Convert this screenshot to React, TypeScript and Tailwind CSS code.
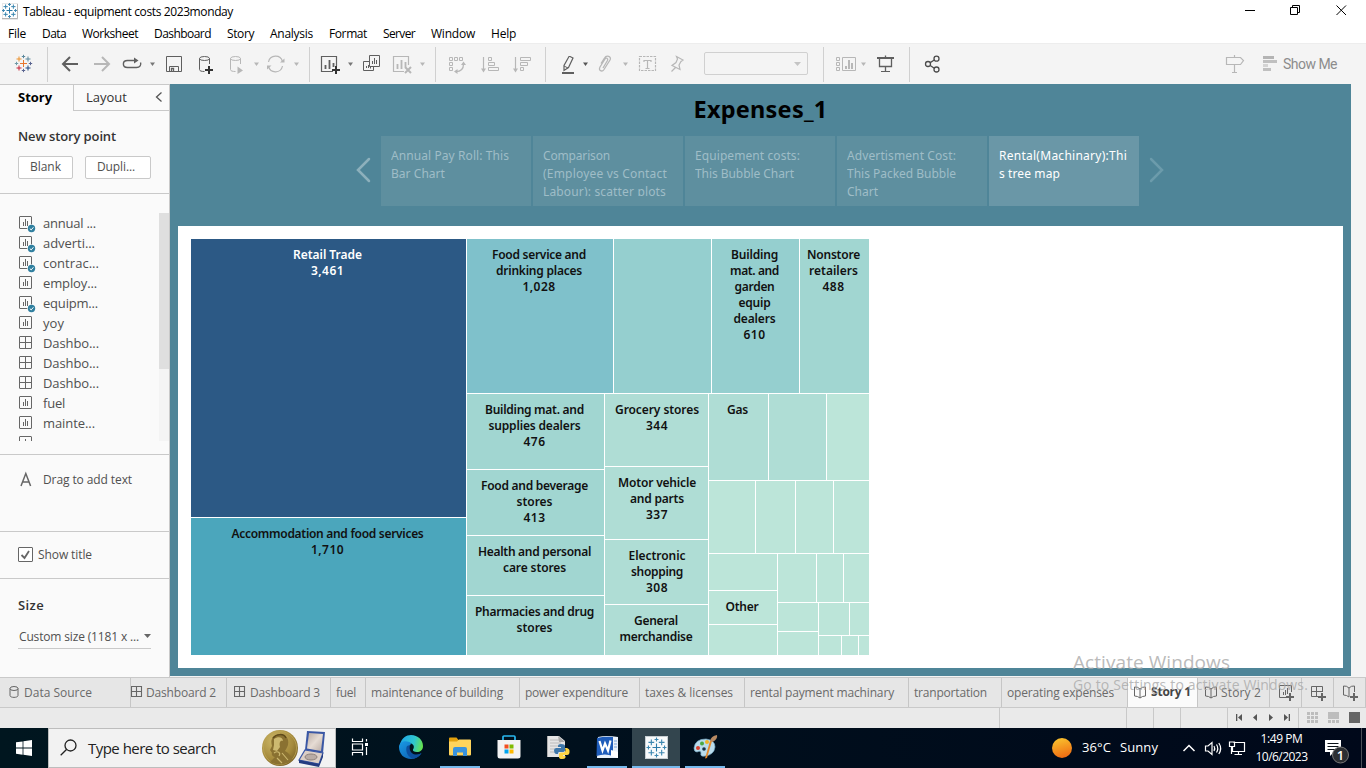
import { useLayoutEffect, useRef } from "react";
import type { ReactNode } from "react";

const SEGOE = "font-['Open_Sans',sans-serif]";
const VIZ = "font-['Noto_Sans',sans-serif]";

/* Single line of text tracked so that it spans `w` pixels. */
function Fit({ w, className = "", children }: { w: number; className?: string; children: string }) {
  const ref = useRef<HTMLSpanElement>(null);
  useLayoutEffect(() => {
    const el = ref.current;
    if (!el) return;
    el.style.letterSpacing = "0px";
    const natural = el.getBoundingClientRect().width;
    el.style.letterSpacing = `${(w - natural) / children.length}px`;
  }, [w, children]);
  return (
    <span ref={ref} className={`inline-block shrink-0 whitespace-pre ${className}`}>
      {children}
    </span>
  );
}

function Plus({ x, y, r, c, s = 1 }: { x: number; y: number; r: number; c: string; s?: number }) {
  return <path d={`M${x - r} ${y}H${x + r}M${x} ${y - r}V${y + r}`} stroke={c} strokeWidth={s} fill="none" />;
}

function TableauMark({ x, y, k, colors, s = 1 }: { x: number; y: number; k: number; colors: string[]; s?: number }) {
  const d = 4.5 * k;
  const f = 7 * k;
  return (
    <g>
      <Plus x={x} y={y} r={3.5 * k} c={colors[0]} s={s} />
      <Plus x={x} y={y - f} r={1.7 * k} c={colors[1]} s={s} />
      <Plus x={x + d} y={y - d} r={2.5 * k} c={colors[2]} s={s} />
      <Plus x={x + f} y={y} r={1.7 * k} c={colors[3]} s={s} />
      <Plus x={x + d} y={y + d} r={2.5 * k} c={colors[4]} s={s} />
      <Plus x={x} y={y + f} r={1.7 * k} c={colors[5]} s={s} />
      <Plus x={x - d} y={y + d} r={2.5 * k} c={colors[6]} s={s} />
      <Plus x={x - f} y={y} r={1.7 * k} c={colors[7]} s={s} />
      <Plus x={x - d} y={y - d} r={2.5 * k} c={colors[8]} s={s} />
    </g>
  );
}

const BLUES = ["#2b7aa8", "#3c87b0", "#3c87b0", "#3c87b0", "#3c87b0", "#3c87b0", "#3c87b0", "#3c87b0", "#3c87b0"];
const BRAND = ["#e8762d", "#5b879b", "#5b879b", "#5b6591", "#1f457e", "#5b6591", "#c72035", "#7099a6", "#eb912c"];

/* ---------- title bar and menu ---------- */

function TitleBar() {
  return (
    <div className="flex h-6 shrink-0 items-start bg-white">
      <svg width="16" height="17" viewBox="0 0 16 17" className="ml-0.5 mr-[5px] mt-[3px] shrink-0">
        <rect x="0.5" y="0.5" width="15" height="16" fill="#fff" stroke="#e8e8e8" />
        <path d="M0 15.500H15.500V1" stroke="#b5b5b5" fill="none" />
        <TableauMark x={7.5} y={7.5} k={0.86} colors={BLUES} />
      </svg>
      <Fit w={210} className="text-xs leading-6 text-black">Tableau - equipment costs 2023monday</Fit>
      <div className="grow" />
      <svg width="126" height="24" viewBox="1240 0 126 24" fill="none" stroke="#000">
        <path d="M1245 10.500H1255" />
        <path d="M1290.500 7.500H1297.500V14.500H1290.500ZM1292.500 7V5.500H1299.500V12.500H1298" />
        <path d="M1336.500 5.500L1346 15M1346 5.500L1336.500 15" />
      </svg>
    </div>
  );
}

const MENUS: [string, number][] = [
  ["File", 18], ["Data", 24], ["Worksheet", 56], ["Dashboard", 57], ["Story", 27],
  ["Analysis", 43], ["Format", 38], ["Server", 32], ["Window", 44], ["Help", 25],
];

function MenuBar() {
  return (
    <div className="flex h-[19px] shrink-0 items-start gap-4 bg-white pl-2">
      {MENUS.map(([t, w]) => (
        <Fit key={t} w={w} className="text-xs leading-5 text-black">{t}</Fit>
      ))}
    </div>
  );
}

/* ---------- toolbar ---------- */

const DK = "#5f5f5f";
const LT = "#b7b7b7";

function Cell({ x, w, c = DK, children }: { x: number; w: number; c?: string; children: ReactNode }) {
  return (
    <svg width={w} height="24" viewBox={`${x} 52 ${w} 24`} fill="none" stroke={c} className="mt-[9px] shrink-0">
      {children}
    </svg>
  );
}

function Sep() {
  return <div className="mt-1 h-[35px] w-px shrink-0 bg-[#d0d0d0]" />;
}

function Caret({ x, c }: { x: number; c: string }) {
  return <path d={`M${x} 62.500H${x + 5}L${x + 2.5} 66Z`} fill={c} stroke="none" />;
}

function Cylinder({ x }: { x: number }) {
  return (
    <g>
      <ellipse cx={x + 5} cy="58.500" rx="5" ry="2" />
      <path d={`M${x} 58.500V69.500C${x} 71 ${x + 2} 71.500 ${x + 5} 71.500M${x + 10} 58.500V64`} />
    </g>
  );
}

function Toolbar() {
  return (
    <div className="flex h-[41px] shrink-0 items-start border-t border-[#ededed] bg-[#f4f4f4] *:-translate-y-px">
      <Cell x={0} w={47}><TableauMark x={23.5} y={63.5} k={1} colors={BRAND} /></Cell>
      <Sep />
      <Cell x={48} w={44}><path d="M78 64H63.500M70 57L63 64L70 71" strokeWidth="2" /></Cell>
      <Cell x={92} w={26} c={LT}><path d="M94 64H108.500M102 57L109 64L102 71" strokeWidth="2" /></Cell>
      <Cell x={118} w={42}>
        <path d="M135 60.500H127.500C122 60.500 122 67.500 127.500 67.500H136.500C140 67.500 141.500 65 140.500 62.500" strokeWidth="1.400" />
        <path d="M134 57.500L138.500 60.500L134 63.500Z" fill={DK} stroke="none" />
        <Caret x={150} c="#777" />
      </Cell>
      <Cell x={160} w={30}>
        <path d="M166.500 56.500H181.500V71.500H166.500Z" />
        <path d="M169.500 71V66.500H178.500V71" /><path d="M171.500 71V68.500H173.500V71" strokeWidth="1.300" />
      </Cell>
      <Cell x={190} w={34}>
        <Cylinder x={199.5} />
        <path d="M205 70H213M209 66V74" stroke="#333" strokeWidth="2" />
      </Cell>
      <Cell x={224} w={38} c={LT}>
        <Cylinder x={230.5} /><path d="M237.500 66.500L243 70.500L237.500 74Z" fill={LT} stroke="none" /><Caret x={254} c={LT} />
      </Cell>
      <Cell x={262} w={47} c={LT}>
        <path d="M268.500 62A7.200 7.200 0 0 1 282.500 61.500M282.500 66A7.200 7.200 0 0 1 268.500 66.500" strokeWidth="1.200" />
        <path d="M280 62.500H284.500V58.500ZM271.500 65.500H267V69.500Z" fill={LT} stroke="none" />
        <Caret x={294} c={LT} />
      </Cell>
      <Sep />
      <Cell x={310} w={46}>
        <path d="M333 71.500H321.500V56.500H336.500V66" strokeWidth="1.200" />
        <path d="M325.500 65V69M329.500 60V69M333.500 63V67" strokeWidth="1.800" />
        <path d="M332 70H340M336 66V74" stroke="#333" strokeWidth="2" /><Caret x={348} c="#777" />
      </Cell>
      <Cell x={356} w={30}>
        <path d="M369.500 55.500H379.500V66.500H369.500ZM369 61.500H363.500V70.500H373.500V67" />
        <path d="M372.500 61V64M374.500 58V64M376.500 60V64M366.500 66V68M368.500 65V68M370.500 67V68.500" />
      </Cell>
      <Cell x={386} w={49} c={LT}>
        <path d="M404 71.500H393.500V56.500H408.500V65" strokeWidth="1.200" />
        <path d="M397.500 64V69M401.500 60V69M405.500 62V67" strokeWidth="1.800" />
        <path d="M405 67L411 73M411 67L405 73" strokeWidth="2" /><Caret x={420} c={LT} />
      </Cell>
      <Sep />
      <Cell x={436} w={38} c={LT}>
        <path d="M449.500 57.500H452.500V60.500H449.500ZM454.500 57.500H457.500V60.500H454.500ZM459.500 57.500H462.500V60.500H459.500ZM449.500 62.500H452.500V65.500H449.500ZM449.500 67.500H452.500V70.500H449.500Z" />
        <path d="M456 71.500C461 71.500 463.500 69 463.500 64" strokeWidth="1.300" />
        <path d="M461 65H466L463.500 61.500ZM457.500 69V74L454 71.500Z" fill={LT} stroke="none" />
      </Cell>
      <Cell x={474} w={32} c={LT}>
        <path d="M483.500 57V70" strokeWidth="1.200" /><path d="M481 68.500H486L483.500 72.500Z" fill={LT} stroke="none" />
        <path d="M488.500 57.500H491.500V60.500H488.500ZM488.500 62.500H494.500V65.500H488.500ZM488.500 67.500H498.500V70.500H488.500Z" />
      </Cell>
      <Cell x={506} w={39} c={LT}>
        <path d="M515.500 57V70" strokeWidth="1.200" /><path d="M513 68.500H518L515.500 72.500Z" fill={LT} stroke="none" />
        <path d="M520.500 57.500H530.500V60.500H520.500ZM520.500 62.500H527.500V65.500H520.500ZM520.500 67.500H523.500V70.500H520.500Z" />
      </Cell>
      <Sep />
      <Cell x={546} w={46}>
        <path d="M570 56.500L573 58L568.500 67.500L564 70.500V65.500L569 56.500Z" strokeWidth="1.200" />
        <path d="M564 66L568 68" /><path d="M562 73H574" strokeWidth="2" />
        <Caret x={583} c="#555" />
      </Cell>
      <Cell x={592} w={40} c={LT}>
        <path d="M603 68L607.500 60.500C608.500 58.500 606 57 605 59L600 67C598 70.500 602 72.500 604 69.500L610 60C612 56.500 606.500 54.500 604.500 58L601 63.500" strokeWidth="1.300" />
        <Caret x={623} c={LT} />
      </Cell>
      <Cell x={632} w={30} c={LT}>
        <path d="M639.500 56.500H655.500V70.500H639.500Z" strokeDasharray="2.500 1" strokeWidth="1.200" />
        <path d="M644 62V60.500H651V62M647.500 60.500V68M645.500 68.500H649.500" strokeWidth="1.200" />
      </Cell>
      <Cell x={662} w={42} c={LT}>
        <path d="M676.500 56.500L683 60L681 61.500L679 65L680 69.500L672 65.500L676 62.500L677.500 59ZM675.500 67.500L671.500 71.500" strokeWidth="1.200" />
      </Cell>
      <div className="mt-[9px] flex h-[23px] w-[104px] shrink-0 items-center justify-end rounded-xs border border-[#d0d0d0] pr-1.5">
        <svg width="7" height="4"><path d="M0 0H7L3.500 4Z" fill="#c4c4c4" /></svg>
      </div>
      <div className="w-[15px] shrink-0" />
      <Sep />
      <Cell x={824} w={46} c={LT}>
        <path d="M836.500 57.500H839.500V60.500H836.500ZM836.500 62.500H839.500V65.500H836.500ZM836.500 67.500H839.500V70.500H836.500ZM842.500 57.500H855.500V70.500H842.500Z" />
        <path d="M846 66V69M849 60V69M852 63V69" strokeWidth="2" /><Caret x={861} c={LT} />
      </Cell>
      <Cell x={870} w={39}>
        <path d="M877 58H894" strokeWidth="2" /><path d="M879.500 58V66.500H891.500V58M885.500 55.500V57M885.500 67V71" strokeWidth="1.300" /><path d="M881 71.500H890" />
      </Cell>
      <Sep />
      <Cell x={910} w={40} c="#4c4c4c">
        <circle cx="928" cy="64" r="2.500" strokeWidth="1.300" /><circle cx="936.500" cy="58.700" r="2.500" strokeWidth="1.300" /><circle cx="936.500" cy="69.500" r="2.500" strokeWidth="1.300" />
        <path d="M930.200 62.600L934.300 60M930.200 65.500L934.300 68.200" strokeWidth="1.300" />
      </Cell>
      <div className="grow" />
      <Cell x={1220} w={40} c={LT}>
        <path d="M1226.500 57.500H1240.500L1243.500 60.500L1240.500 64.500H1226.500ZM1234.500 55V57M1234.500 65V72M1232 72.500H1237" strokeWidth="1.200" />
      </Cell>
      <Cell x={1260} w={23} c="#b4b4b4">
        <path d="M1263 57.500H1274" strokeWidth="3" /><path d="M1263 61.500H1277" strokeWidth="3" stroke="#c0c0c0" />
        <path d="M1263 65.500H1268" strokeWidth="3" stroke="#d4d4d4" /><path d="M1263 69.500H1271" strokeWidth="3" stroke="#c0c0c0" />
      </Cell>
      <div className="mt-[9px] flex h-6 w-[83px] shrink-0 items-center font-['Roboto',sans-serif] text-[14px] text-[#8c8c8c]">
        <Fit w={54}>Show Me</Fit>
      </div>
    </div>
  );
}

/* ---------- story side panel ---------- */

type Kind = "sheet" | "used" | "dash";

const SHEETS: [Kind, string, number][] = [
  ["used", "annual ...", 53], ["used", "adverti...", 52], ["used", "contrac...", 56], ["sheet", "employ...", 54],
  ["used", "equipm...", 55], ["sheet", "yoy", 21], ["dash", "Dashbo...", 56], ["dash", "Dashbo...", 56],
  ["dash", "Dashbo...", 56], ["sheet", "fuel", 22], ["sheet", "mainte...", 52], ["sheet", "power ...", 52],
];

function SheetIcon({ kind }: { kind: Kind }) {
  return (
    <svg width="18" height="18" viewBox="0 0 18 18" fill="none" stroke="#666" className="mt-px shrink-0">
      <rect x="0.500" y="1.500" width="12" height="12" rx="0.500" />
      {kind === "dash" ? (
        <path d="M6.500 2V13M1 7.500H12" />
      ) : (
        <path d="M4.500 7V11M6.500 4V11M8.500 6V11" />
      )}
      {kind === "used" && (
        <g>
          <circle cx="12.500" cy="13.500" r="4.300" fill="#fafafa" stroke="none" />
          <circle cx="12.500" cy="13.500" r="3.700" fill="#2f7f9f" stroke="none" />
          <path d="M10.800 13.600L12.200 14.900L14.400 12.300" stroke="#fff" />
        </g>
      )}
    </svg>
  );
}

function SidePanel() {
  return (
    <aside className="flex h-full w-[170px] shrink-0 flex-col border-r border-t border-[#c9c9c9] bg-[#fafafa] font-['Open_Sans',sans-serif] text-[#505050]">
      <div className="flex h-[26px] shrink-0">
        <div className="flex w-[73px] items-start pl-[18px] text-[13px] font-bold text-black">
          <Fit w={34} className="leading-6">Story</Fit>
        </div>
        <div className="flex grow items-start justify-between border-b border-l border-[#c9c9c9] pl-3 pr-1.5 text-[13px] text-[#333]">
          <Fit w={41} className="leading-6">Layout</Fit>
          <svg width="8" height="10" fill="none" stroke="#555" className="mt-[7px]"><path d="M6.500 0.500L1.500 5L6.500 9.500" strokeWidth="1.300" /></svg>
        </div>
      </div>
      <div className="flex h-[82px] shrink-0 flex-col items-start pl-[18px] pt-4">
        <Fit w={98} className="text-[13px] font-semibold leading-[18px] text-[#333]">New story point</Fit>
        <div className="mt-[11px] flex gap-3 text-xs leading-5">
          <div className="flex h-[23px] w-[55px] items-start justify-center rounded-xs border border-[#c9c9c9] bg-white"><Fit w={31}>Blank</Fit></div>
          <div className="flex h-[23px] w-[66px] items-start rounded-xs border border-[#c9c9c9] bg-white pl-[11px]"><Fit w={38}>Dupli...</Fit></div>
        </div>
      </div>
      <div className="h-px shrink-0 bg-[#c9c9c9]" />
      <div className="mt-[19px] flex h-[228px] shrink-0">
        <div className="flex grow flex-col overflow-hidden pl-[19px] pt-px">
          {SHEETS.map(([kind, t, w], i) => (
            <div key={i} className="flex h-5 shrink-0 items-start gap-1.5">
              <SheetIcon kind={kind} />
              <Fit w={w} className="-mt-px text-[13px] leading-5">{t}</Fit>
            </div>
          ))}
        </div>
        <div className="w-2.5 shrink-0 bg-[#f4f4f4]"><div className="h-[156px] bg-[#dfdfdf]" /></div>
      </div>
      <div className="mt-[13px] h-px shrink-0 bg-[#c9c9c9]" />
      <div className="flex h-[76px] shrink-0 items-start pl-5 pt-[15px]">
        <svg width="12" height="17" viewBox="0 0 12 17" fill="none" stroke="#666" strokeWidth="1.500" className="mr-[11px] mt-px"><path d="M1 15L5.800 2.500L10.600 15M2.600 11H9" /></svg>
        <Fit w={89} className="h-5 text-xs leading-5">Drag to add text</Fit>
      </div>
      <div className="h-px shrink-0 bg-[#c9c9c9]" />
      <div className="flex h-[46px] shrink-0 items-start gap-[5px] pl-[18px] pt-[15px]">
        <svg width="15" height="15" fill="none" stroke="#666"><rect x="0.500" y="0.500" width="14" height="14" rx="0.500" fill="#fff" /><path d="M3.500 8L6.500 11L11 4" strokeWidth="1.800" /></svg>
        <Fit w={54} className="text-xs leading-4">Show title</Fit>
      </div>
      <div className="h-px shrink-0 bg-[#c9c9c9]" />
      <div className="flex flex-col items-start pl-[18px] pt-[17px]">
        <Fit w={26} className="text-[13px] font-semibold leading-[18px] text-[#333]">Size</Fit>
        <div className="mt-[13px] flex h-[22px] w-[133px] items-center justify-between border-b border-[#c9c9c9] pl-px text-xs">
          <Fit w={120} className="-mt-0.5">Custom size (1181 x ...</Fit>
          <svg width="7" height="4" className="-mt-1"><path d="M0 0H7L3.500 4Z" fill="#666" /></svg>
        </div>
      </div>
    </aside>
  );
}

/* ---------- tree map ---------- */

function Tile({ className, lines = [], nudge = "pr-0.5" }: { className: string; lines?: [string, number][]; nudge?: string }) {
  return (
    <div className={`flex shrink-0 flex-col items-center overflow-hidden pt-2 text-xs font-semibold leading-4 ${nudge} ${className}`}>
      {lines.map(([t, w], i) => (
        <Fit key={i} w={w} className="h-4">{t}</Fit>
      ))}
    </div>
  );
}

const T3 = "bg-[#95cfcf]";
const T4 = "bg-[#a1d6d1]";
const T5 = "bg-[#afddd5]";
const T6 = "bg-[#bce5d9]";

function TreeMap() {
  return (
    <div className={`flex h-[416px] w-[678px] gap-px text-[#111] ${VIZ}`}>
      <div className="flex w-[275px] shrink-0 flex-col gap-px">
        <Tile className="h-[278px] bg-[#2c5985] text-white" lines={[["Retail Trade", 69], ["3,461", 33]]} />
        <Tile className="h-[137px] bg-[#4ba6bc]" lines={[["Accommodation and food services", 192], ["1,710", 33]]} />
      </div>
      <div className="flex flex-col gap-px">
        <div className="flex h-[154px] gap-px">
          <Tile className="w-[146px] bg-[#7fc1cb]" lines={[["Food service and", 94], ["drinking places", 86], ["1,028", 33]]} />
          <Tile className={`w-[97px] ${T3}`} />
          <Tile className={`w-[87px] ${T3}`} lines={[["Building", 47], ["mat. and", 49], ["garden", 40], ["equip", 32], ["dealers", 42], ["610", 22]]} />
          <Tile className={`w-[69px] ${T4}`} lines={[["Nonstore", 53], ["retailers", 49], ["488", 22]]} />
        </div>
        <div className="flex h-[261px] gap-px">
          <div className="flex w-[137px] flex-col gap-px">
            <Tile className={`h-[75px] ${T4}`} lines={[["Building mat. and", 99], ["supplies dealers", 92], ["476", 22]]} />
            <Tile className={`h-[65px] ${T4}`} lines={[["Food and beverage", 107], ["stores", 36], ["413", 22]]} />
            <Tile className={`h-[59px] ${T4}`} lines={[["Health and personal", 113], ["care stores", 63]]} />
            <Tile className={`h-[59px] ${T4}`} lines={[["Pharmacies and drug", 119], ["stores", 36]]} />
          </div>
          <div className="flex w-[103px] flex-col gap-px">
            <Tile nudge="pl-px" className={`h-[72px] ${T5}`} lines={[["Grocery stores", 84], ["344", 22]]} />
            <Tile nudge="pl-px" className={`h-[72px] ${T5}`} lines={[["Motor vehicle", 78], ["and parts", 54], ["337", 22]]} />
            <Tile nudge="pl-px" className={`h-[64px] ${T5}`} lines={[["Electronic", 57], ["shopping", 52], ["308", 22]]} />
            <Tile nudge="pr-px" className={`h-[50px] ${T5}`} lines={[["General", 44], ["merchandise", 73]]} />
          </div>
          <div className="flex w-[160px] flex-col gap-px">
            <div className="flex h-[86px] gap-px">
              <Tile className={`w-[59px] ${T5}`} lines={[["Gas", 21]]} />
              <Tile className={`w-[57px] ${T5}`} />
              <Tile className={`w-[42px] ${T6}`} />
            </div>
            <div className="flex h-[72px] gap-px">
              <Tile className={`w-[46px] ${T6}`} />
              <Tile className={`w-[39px] ${T6}`} />
              <Tile className={`w-[37px] ${T6}`} />
              <Tile className={`w-[35px] ${T6}`} />
            </div>
            <div className="flex h-[101px] gap-px">
              <div className="flex w-[68px] flex-col gap-px">
                <Tile className={`h-[36px] ${T6}`} />
                <Tile className={`h-[33px] ${T6}`} lines={[["Other", 33]]} />
                <Tile className={`h-[30px] ${T6}`} />
              </div>
              <div className="flex w-[91px] flex-col gap-px">
                <div className="flex h-[48px] gap-px">
                  <Tile className={`w-[38px] ${T6}`} />
                  <Tile className={`w-[26px] ${T6}`} />
                  <Tile className={`w-[25px] ${T6}`} />
                </div>
                <div className="flex h-[52px] gap-px">
                  <div className="flex w-[40px] flex-col gap-px">
                    <Tile className={`h-[28px] ${T6}`} />
                    <Tile className={`h-[23px] ${T6}`} />
                  </div>
                  <div className="flex w-[50px] flex-col gap-px">
                    <div className="flex h-[32px] gap-px">
                      <Tile className={`w-[30px] ${T6}`} />
                      <Tile className={`w-[19px] ${T6}`} />
                    </div>
                    <div className="flex h-[19px] gap-px">
                      <Tile className={`w-[22px] ${T6}`} />
                      <Tile className={`w-[16px] ${T6}`} />
                      <Tile className={`w-[10px] ${T6}`} />
                    </div>
                  </div>
                </div>
              </div>
            </div>
          </div>
        </div>
      </div>
    </div>
  );
}

/* ---------- story view ---------- */

const POINTS: [string, number][][] = [
  [["Annual Pay Roll: This", 118], ["Bar Chart", 54]],
  [["Comparison", 67], ["(Employee vs Contact", 124], ["Labour): scatter plots", 123]],
  [["Equipement costs:", 105], ["This Bubble Chart", 99]],
  [["Advertisment Cost:", 109], ["This Packed Bubble", 109], ["Chart", 31]],
  [["Rental(Machinary):Thi", 128], ["s tree map", 61]],
];

function StoryView() {
  return (
    <main className="flex h-[592px] w-[1181px] shrink-0 flex-col bg-[#4f8598]">
      <div className={`flex h-[52px] shrink-0 items-start justify-center font-bold text-black ${VIZ}`}>
        <Fit w={134} className="text-[23.5px] leading-[50px]">Expenses_1</Fit>
      </div>
      <div className="flex h-[70px] shrink-0 items-center pl-[185px]">
        <svg width="26" height="26" fill="none" stroke="#8db0bc" strokeWidth="2.500" strokeLinecap="round" className="-mt-0.5"><path d="M14 2L3 13L14 24" /></svg>
        <div className="flex gap-0.5">
          {POINTS.map((lines, i) => {
            const on = i === 4;
            return (
              <div key={i} className={`h-[70px] w-[150px] pl-2.5 pt-[11px] ${on ? "bg-[#6a97a7] text-white" : "bg-[#5e8f9f] text-[#9fbdc7]"}`}>
                <div className={`flex h-[49px] flex-col items-start overflow-hidden text-[12px] leading-[18px] ${VIZ}`}>
                  {lines.map(([t, w]) => (
                    <Fit key={t} w={w} className="h-[18px]">{t}</Fit>
                  ))}
                </div>
              </div>
            );
          })}
        </div>
        <svg width="26" height="26" fill="none" stroke="#6c9bab" strokeWidth="2.500" strokeLinecap="round" className="-mt-0.5"><path d="M12 2L23 13L12 24" /></svg>
      </div>
      <div className="ml-2 mt-5 h-[442px] w-[1165px] shrink-0 bg-white pl-[13px] pt-[13px]">
        <TreeMap />
      </div>
    </main>
  );
}

/* ---------- sheet tabs and status ---------- */

function Grid4() {
  return <svg width="12" height="13" fill="none" stroke="#666" className="shrink-0"><path d="M0.500 0.500H10.500V10.500H0.500ZM5.500 0V11M0 5.500H11" strokeWidth="1.100" /></svg>;
}

function Book() {
  return <svg width="12" height="13" fill="none" stroke="#666" className="shrink-0"><path d="M0.500 1L3.500 1.300L6 3L8.500 1.300L11.500 1V10L8.500 10.500L6 12L3.500 10.500L0.500 10ZM6 3V12" /></svg>;
}

const TABS: [string, string, number][] = [
  ["fuel", "w-[35px]", 20], ["maintenance of building", "w-[154px]", 132], ["power expenditure", "w-[120px]", 103],
  ["taxes & licenses", "w-[105px]", 88], ["rental payment machinary", "w-[164px]", 144],
  ["tranportation", "w-[93px]", 73], ["operating expenses", "w-[126px]", 107],
];

const TAB = "flex h-full shrink-0 border-r border-[#c6c6c6]";

function SheetTabs() {
  return (
    <div className="flex h-[31px] w-full shrink-0 border-b border-t border-[#c9c9c9] bg-[#e6e6e6] font-['Open_Sans',sans-serif] text-xs text-[#6a6a6a]">
      <div className={`${TAB} w-[131px] items-center pl-[9px]`}>
        <svg width="10" height="13" fill="none" stroke="#666" className="mr-[5px]"><ellipse cx="5" cy="2.500" rx="4" ry="2" /><path d="M1 2.500V9.500C1 12 9 12 9 9.500V2.500" /></svg>
        <Fit w={68}>Data Source</Fit>
      </div>
      <div className={`${TAB} w-24 items-center`}><Grid4 /><Fit w={70} className="ml-[3px]">Dashboard 2</Fit></div>
      <div className={`${TAB} w-[104px] items-center pl-[7px]`}><Grid4 /><Fit w={70} className="ml-1">Dashboard 3</Fit></div>
      {TABS.map(([t, width, tw], i) => (
        <div key={i} className={`${TAB} items-center pl-[5px] ${width}`}>
          <Fit w={tw}>{t}</Fit>
        </div>
      ))}
      <div className={`${TAB} w-[70px] items-center bg-[#fbfbfb] pl-1.5 font-bold text-[#444]`}><Book /><Fit w={40} className="-mt-0.5 ml-[5px]">Story 1</Fit></div>
      <div className={`${TAB} w-[72px] items-center pl-[7px]`}><Book /><Fit w={40} className="ml-1">Story 2</Fit></div>
      <div className={`${TAB} w-8 items-start pl-[9px] pt-[7px]`}>
        <svg width="16" height="16" fill="none" stroke="#666"><path d="M7 12.500H0.500V0.500H12.500V7M4.500 7V10M6.500 5V10M8.500 3V9" /><path d="M7 12H15M11 8V16" strokeWidth="2" /></svg>
      </div>
      <div className={`${TAB} w-8 items-start pl-[9px] pt-[7px]`}>
        <svg width="16" height="16" fill="none" stroke="#666"><path d="M7 11.500H0.500V1.500H11.500V7M5.500 1V12M0 6.500H12" /><path d="M7 12H15M11 8V16" strokeWidth="2" /></svg>
      </div>
      <div className={`${TAB} w-8 items-start pl-[9px] pt-[7px]`}>
        <svg width="16" height="16" fill="none" stroke="#666"><path d="M6 12L3.500 10.500L0.500 10V1L3.500 1.300L6 3L8.500 1.300L11.500 1V7M6 3V12" /><path d="M7 12H15M11 8V16" strokeWidth="2" /></svg>
      </div>
    </div>
  );
}

function StatusBar() {
  const cell = "h-full shrink-0 border-r border-[#c9c9c9]";
  return (
    <div className="flex h-5 w-full shrink-0 items-center bg-[#eaeaea]">
      <div className={`${cell} w-[1000px]`} />
      <div className={`${cell} w-[127px]`} />
      <div className={`${cell} w-[27px]`} />
      <div className={`${cell} w-[27px]`} />
      <div className={`${cell} w-[47px]`} />
      <div className={`${cell} w-[71px]`}>
        <svg width="70" height="20" viewBox="1228 708 70 20" fill="#555">
          <path d="M1236 714H1237.300V721H1236ZM1242 714V721L1238 717.500ZM1257 714V721L1253 717.500ZM1269 714V721L1273 717.500ZM1284 714V721L1288 717.500ZM1288.700 714H1290V721H1288.700Z" />
        </svg>
      </div>
      <svg width="67" height="20" viewBox="1299 708 67 20" fill="#bdbdbd" className="shrink-0">
        {[0, 1, 2].map((r) => [0, 1, 2].map((c) => <rect key={`${r}${c}`} x={1307 + c * 4} y={712 + r * 4} width="3" height="3" />))}
        <rect x="1328" y="712" width="11" height="7" />
        <rect x="1328" y="720" width="3" height="3" /><rect x="1332" y="720" width="3" height="3" /><rect x="1336" y="720" width="3" height="3" />
        <rect x="1349" y="712" width="11" height="11" fill="#666" />
      </svg>
    </div>
  );
}

/* ---------- taskbar ---------- */

function App48({ open, active, children }: { open?: boolean; active?: boolean; children: ReactNode }) {
  return (
    <div className={`flex h-full w-12 shrink-0 flex-col items-center ${active ? "bg-[#33454e]" : ""}`}>
      <div className="flex h-[38px] items-center">{children}</div>
      <div className={`h-0.5 ${active ? "w-12" : "w-10"} ${open || active ? "bg-[#76b9ed]" : ""}`} />
    </div>
  );
}

function Medal() {
  return (
    <svg width="66" height="38" viewBox="261 729 66 38">
      <defs>
        <radialGradient id="gold" cx="0.35" cy="0.3" r="0.85"><stop offset="0" stopColor="#cdb868" /><stop offset="0.600" stopColor="#a58a3c" /><stop offset="1" stopColor="#6d561f" /></radialGradient>
        <linearGradient id="satin" x1="0" x2="1" y1="0" y2="1"><stop offset="0" stopColor="#b8aaa4" /><stop offset="0.500" stopColor="#e6dcd4" /><stop offset="1" stopColor="#b9aba4" /></linearGradient>
      </defs>
      <circle cx="280" cy="748" r="18" fill="url(#gold)" />
      <circle cx="280" cy="748" r="16.500" fill="none" stroke="#bda655" strokeWidth="0.800" />
      <path d="M273 737C278 732 287 734 288 740C289 745 287 748 285 751C289 753 292 757 293 760C285 766 276 765 270 762L275 757C273 757 271 755 272 753L270 750L272 746C271 742 271 740 273 737Z" fill="#8a7131" />
      <path d="M274 739C278 736 283 737 283 741C280 740 279 743 280 747L277 751L273 750L274 745Z" fill="#cdb970" />
      <path d="M273 738C276 734 284 733 286 738" stroke="#5f4b1a" strokeWidth="1.500" fill="none" />
      <path d="M274 753C278 750 281 753 279 756M282 753L288 760M277 758L282 763" stroke="#cdb970" strokeWidth="1.100" fill="none" />
      <path d="M307 731L325 732L323 753L305 750Z" fill="#3a57a5" />
      <path d="M309 733L323 734L321 751L307 748.500Z" fill="url(#satin)" />
      <path d="M305 750L323 753L319 764L299 760Z" fill="#dccfc6" stroke="#3a57a5" strokeWidth="1.200" />
      <path d="M299 760L319 764V767L299 763ZM323 753V757L319 767V764Z" fill="#243c80" />
      <ellipse cx="311" cy="757" rx="6" ry="3" fill="#b9aca5" stroke="#8d817c" />
    </svg>
  );
}

function Taskbar() {
  return (
    <footer className={`flex h-10 w-full shrink-0 bg-linear-to-r from-[#00161f] to-[#00081a] text-white ${SEGOE}`}>
      <div className="flex w-12 shrink-0 items-center justify-center">
        <svg width="16" height="16" fill="#fff"><path d="M0 2.300L6.600 1.400V7.600H0ZM7.400 1.300L16 0V7.600H7.400ZM0 8.400H6.600V14.700L0 13.800ZM7.400 8.400H16V16L7.400 14.800Z" /></svg>
      </div>
      <div className="flex w-72 shrink-0 items-center border border-[#bdbdbd] bg-[#f2f2f2] pl-[11px] text-[#222]">
        <svg width="18" height="18" fill="none" stroke="#222" strokeWidth="1.300"><circle cx="10.500" cy="6.500" r="5.500" /><path d="M6.500 10.500L0.700 16.300" /></svg>
        <Fit w={128} className="ml-[10px] text-[15px]">Type here to search</Fit>
        <div className="ml-[45px]"><Medal /></div>
      </div>
      <App48>
        <svg width="18" height="18" fill="none" stroke="#fff" strokeWidth="1.200"><path d="M1.500 0.500V3.500H11.500V0.500M1.500 17.500V14.500H11.500V17.500M1.500 6H11.500V12H1.500ZM15.500 1V3.500M15.500 9V17" /><rect x="14" y="5" width="3" height="3" fill="#fff" stroke="none" /></svg>
      </App48>
      <div className="ml-[3px] flex shrink-0 gap-px">
        <App48>
          <svg width="24" height="24" viewBox="0 0 24 24">
            <defs>
              <linearGradient id="ea" x1="0" x2="1" y1="0.300" y2="0.500"><stop offset="0" stopColor="#1fa5e6" /><stop offset="0.600" stopColor="#2fc6d0" /><stop offset="1" stopColor="#66e34f" /></linearGradient>
              <linearGradient id="eb" x1="0" x2="1" y1="0" y2="1"><stop offset="0" stopColor="#1a9be5" /><stop offset="1" stopColor="#0b56a8" /></linearGradient>
            </defs>
            <path d="M1 9C3 3 7 0 12 0C19 0 24 5 24 11C24 15 21 17 18 17C15 17 13.500 16 14 14.500C16 12 14.500 8 10 8C6 7.500 2 8 1 12Z" fill="url(#ea)" />
            <path d="M0 12C0 8 4 5.500 8 6.500C12 7 13 9 11 10C8 13 9 20 17 20C19 20 21 19 22.500 18C20 22 16 24 12 24C5 24 0 19 0 12Z" fill="url(#eb)" />
            <path d="M8 11C6 15 8 22 14 23.700C18 23 21 21 22.500 18C16 22 9 18 11 10Z" fill="#0c4f9e" />
          </svg>
        </App48>
        <App48 open>
          <svg width="22" height="20"><path d="M0 1.500Q0 0.500 1 0.500H7.500L9.500 3H22V8H0Z" fill="#e2a10e" /><path d="M0 4.500H8L10 2.500H21Q22 2.500 22 3.500V17.500Q22 18.500 21 18.500H1Q0 18.500 0 17.500Z" fill="#ffd45c" /><path d="M4 19V12Q4 10 6 10H16Q18 10 18 12V19H14V15.500H8V19Z" fill="#3a93dd" /></svg>
        </App48>
        <App48>
          <svg width="24" height="24"><path d="M6 5V2Q6 1 7 1H17Q18 1 18 2V5" fill="none" stroke="#28b8f0" strokeWidth="1.700" /><path d="M0.500 5H23.500V21Q23.500 23.500 21 23.500H3Q0.500 23.500 0.500 21Z" fill="#f3f3f3" /><path d="M7.500 9.500H11.500V13.500H7.500Z" fill="#f25022" /><path d="M12.500 9.500H16.500V13.500H12.500Z" fill="#7fba00" /><path d="M7.500 14.500H11.500V18.500H7.500Z" fill="#00a4ef" /><path d="M12.500 14.500H16.500V18.500H12.500Z" fill="#ffb900" /></svg>
        </App48>
        <App48>
          <svg width="24" height="24"><path d="M1 1H13L19 6V22H1Z" fill="#e5e5e5" /><path d="M1.500 1.500V22" stroke="#777" strokeDasharray="1 1" /><path d="M4 5H13M4 8H15M4 11H12M4 14H9M4 17H9" stroke="#bbb" /><path d="M12 1L19 7H13Z" fill="#aaa" /><path d="M12 11Q12 9 15 9Q19 9 19 11V15Q19 17 16 17H13Q12 17 12 19H10Q8 18 8 15.500Q8 13 10 13H15V12H12Z" fill="#3e77aa" /><path d="M19 13H21Q24 14 23.500 17Q23.500 20 21 20H17V21H19.500V22.500Q19 24 16 24Q13 24 13 22V19Q13 17.500 15 17.500H18Q19.500 17 19.500 15Z" fill="#ffd645" /></svg>
        </App48>
        <App48 open>
          <svg width="23" height="23"><path d="M2 1Q10 -1 22 1V22H1Z" fill="#e9f1fa" /><path d="M1 2Q9 0 17 1V20Q9 17 0.500 20Z" fill="#1f5dbb" /><path d="M3.500 5L6.500 14.500L9 7.500L12 14.500L14.500 4.500" stroke="#fff" strokeWidth="2.200" fill="none" /><path d="M18 5H21M18 8H21M18 11H21" stroke="#7ba3d8" /><path d="M15 14L22 16V22L15 20Z" fill="#fff" /></svg>
        </App48>
        <App48 active>
          <svg width="23" height="23"><rect x="0.500" y="0.500" width="22" height="22" fill="#f8fafb" stroke="#c7ced2" /><TableauMark x={11.5} y={11.5} k={1.15} colors={BLUES} s={1.1} /></svg>
        </App48>
        <App48 open>
          <svg width="25" height="24"><path d="M1 13Q2 4 13 4Q22 5 22 12Q21 20 12 21Q7 22 8 18Q8 15 4 17Q1 17 1 13Z" fill="#b9dcec" stroke="#77a9c4" strokeWidth="0.700" /><circle cx="5" cy="13" r="2" fill="#d9402f" /><circle cx="9" cy="8.500" r="2" fill="#49a943" /><circle cx="14" cy="7" r="2" fill="#f0b428" /><circle cx="11" cy="14" r="1.800" fill="#173247" /><path d="M19 6L14 23L12 23.500L17 6Z" fill="#e38a2e" /><path d="M17 6Q18 1 24 0Q25 4 19.500 7Z" fill="#b78a63" /></svg>
        </App48>
      </div>
      <div className="grow" />
      <svg width="20" height="20" className="mt-2.5 shrink-0"><defs><linearGradient id="sun" x1="0.300" x2="0.600" y1="0" y2="1"><stop offset="0" stopColor="#f9c22e" /><stop offset="1" stopColor="#f06a12" /></linearGradient></defs><circle cx="10" cy="10" r="10" fill="url(#sun)" /></svg>
      <div className="flex w-[101px] shrink-0 items-center pl-2.5 text-[13px]">
        <Fit w={29}>36°C</Fit><Fit w={38} className="ml-[9px]">Sunny</Fit>
      </div>
      <svg width="82" height="40" viewBox="1173 728 82 40" fill="none" stroke="#fff" strokeWidth="1.200" className="shrink-0">
        <path d="M1183.500 751L1189 745.500L1194.500 751" strokeWidth="1.500" />
        <path d="M1205.500 746H1208L1212 742.500V754.500L1208 751H1205.500ZM1214 746Q1215.500 748.500 1214 751M1216.500 744.500Q1219 748.500 1216.500 752.500M1218.800 743Q1222.500 748.500 1218.800 754" />
        <path d="M1233.500 742.500H1244.500V751.500H1232.500V747M1229.500 742H1234.500V746.500H1229.500ZM1231.500 746V754M1238.500 752V754.500M1234.500 754.500H1242" />
      </svg>
      <div className="flex w-[53px] shrink-0 flex-col items-center pt-0.5 text-xs leading-[18px]">
        <Fit w={42}>1:49 PM</Fit><Fit w={52}>10/6/2023</Fit>
      </div>
      <svg width="58" height="40" viewBox="1308 728 58 40" className="shrink-0">
        <path d="M1325 740H1341V752H1334L1330 756V752H1325Z" fill="#fff" />
        <path d="M1327.500 743.500H1338.500M1327.500 746.500H1338.500M1327.500 749.500H1335" stroke="#0b1118" />
        <circle cx="1340.500" cy="755" r="8" fill="#2c2f33" stroke="#777" />
        <text x="1340.500" y="759.500" textAnchor="middle" fill="#fff" fontSize="13" fontWeight="600" fontFamily="Open Sans">1</text>
        <path d="M1361.500 728V768" stroke="#4a5058" />
      </svg>
    </footer>
  );
}

export default function App() {
  return (
    <div className={`relative flex h-[768px] w-[1366px] flex-col overflow-hidden bg-[#f4f4f4] ${SEGOE}`}>
      <TitleBar />
      <MenuBar />
      <Toolbar />
      <div className="flex h-[593px] shrink-0">
        <SidePanel />
        <StoryView />
      </div>
      <SheetTabs />
      <StatusBar />
      <Taskbar />
      <div className="pointer-events-none absolute left-[1073px] top-[650px] flex flex-col items-start text-[#a8a8a8]/80">
        <Fit w={157} className="text-[19px] leading-6">Activate Windows</Fit>
        <Fit w={235} className="text-[14px] leading-[22px]">Go to Settings to activate Windows.</Fit>
      </div>
    </div>
  );
}
